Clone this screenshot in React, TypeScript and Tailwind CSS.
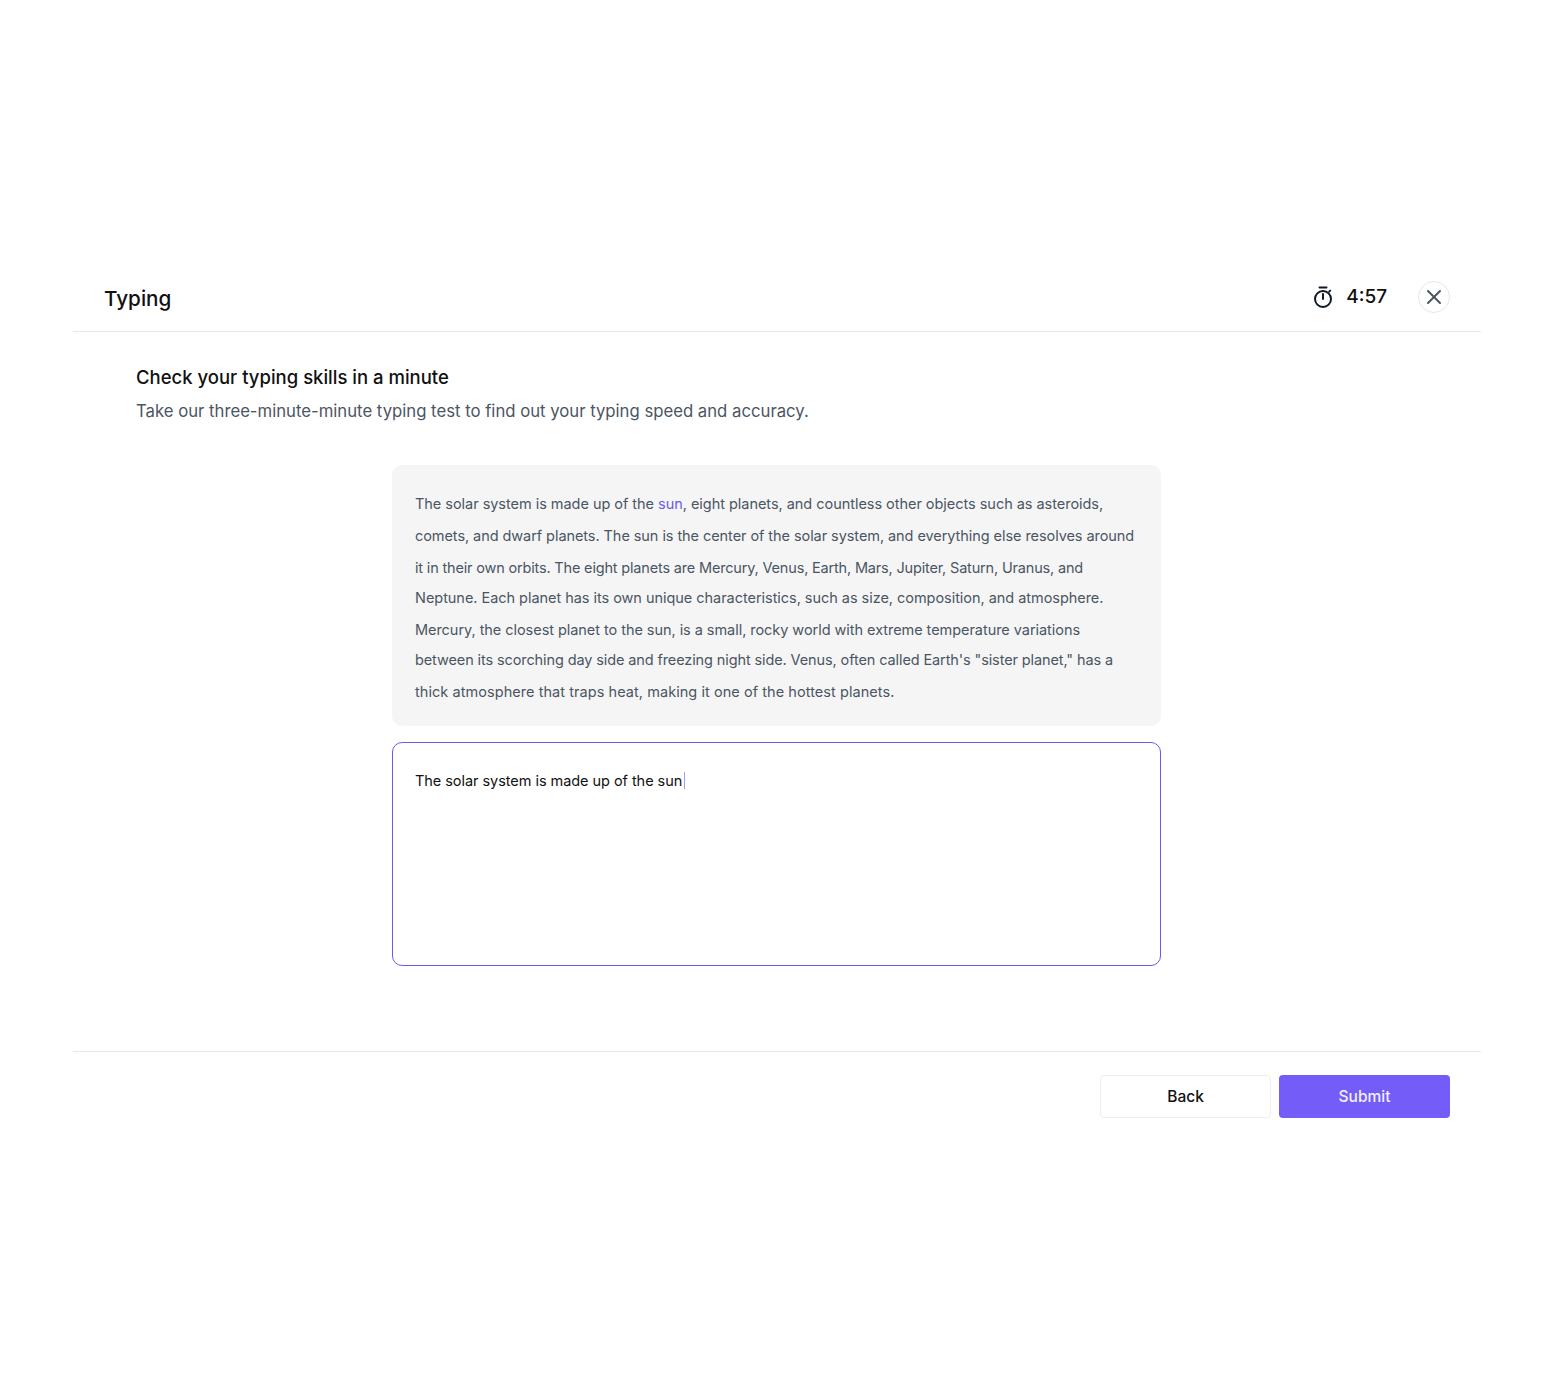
import { X } from "lucide-react";

const lines = [
  {
    cls: "tracking-[-0.036px]",
    text: (
      <>
        The solar system is made up of the <span className="text-[#7058e8]">sun</span>, eight planets, and countless other objects such as asteroids,
      </>
    ),
  },
  { cls: "mt-px tracking-[-0.067px]", text: "comets, and dwarf planets. The sun is the center of the solar system, and everything else resolves around" },
  { cls: "mt-px tracking-[-0.175px]", text: "it in their own orbits. The eight planets are Mercury, Venus, Earth, Mars, Jupiter, Saturn, Uranus, and" },
  { cls: "-mt-px tracking-[-0.04px]", text: "Neptune. Each planet has its own unique characteristics, such as size, composition, and atmosphere." },
  { cls: "mt-px tracking-[-0.05px]", text: "Mercury, the closest planet to the sun, is a small, rocky world with extreme temperature variations" },
  { cls: "-mt-px tracking-[-0.11px]", text: "between its scorching day side and freezing night side. Venus, often called Earth's \"sister planet,\" has a" },
  { cls: "mt-px tracking-[0.056px]", text: "thick atmosphere that traps heat, making it one of the hottest planets." },
];

function Stopwatch() {
  return (
    <svg width="22" height="24" viewBox="0 0 22 24" fill="none" stroke="#111827" strokeWidth="2" strokeLinecap="round">
      <path d="M7.5 2.5h7" />
      <path d="M11 9v5" />
      <path d="M17.2 6.6l1 -1" />
      <circle cx="11" cy="14" r="8" />
    </svg>
  );
}

export default function App() {
  return (
    <div className="min-h-[1400px] bg-white pt-[272px] pr-[69px] pl-[73px] font-['Inter',sans-serif]">
      <header className="flex h-[60px] items-center justify-between border-b border-[#e5e7eb] pr-[31px] pb-[10px] pl-[31px]">
        <h1 className="pt-[4px] text-[20.7px] font-medium text-[#111111]">Typing</h1>
        <div className="flex items-center">
          <Stopwatch />
          <span className="mr-[31px] ml-[12px] pt-[2px] text-[19px] font-medium text-[#111111]">4:57</span>
          <button className="flex h-8 w-8 items-center justify-center rounded-full border border-[#e5e7eb] text-[#4b5563]">
            <X size={24} strokeWidth={2} />
          </button>
        </div>
      </header>

      <section className="h-[719px] pt-[33px] pr-[64px] pl-[63px]">
        <h2 className="text-[18.5px] leading-[24px] font-medium text-[#111111]">Check your typing skills in a minute</h2>
        <p className="mt-[10px] text-[16.72px] leading-[24px] text-[#4b5563]">
          Take our three-minute-minute typing test to find out your typing speed and accuracy.
        </p>

        <div className="mx-auto mt-[42px] w-[769px]">
          <div className="h-[261px] rounded-[10px] bg-[#f5f5f5] px-[23px] pt-[23px] text-[14.5px] leading-[31px] whitespace-nowrap text-[#4b5563]">
            {lines.map((line, i) => (
              <div key={i} className={line.cls}>
                {line.text}
              </div>
            ))}
          </div>
          <div className="mt-4 h-[224px] rounded-[10px] border border-[#7058e8] px-[22px] pt-[22px] text-[14.5px] leading-[32px] tracking-[-0.05px] text-[#111111]">
            The solar system is made up of the sun<span className="ml-[2px] border-l border-[#a99cf0]"></span>
          </div>
        </div>
      </section>

      <footer className="flex justify-end gap-2 border-t border-[#e5e7eb] pt-[23px] pr-[31px]">
        <button className="h-[43px] w-[171px] rounded-[4px] border border-[#eeeeee] bg-white text-[15.5px] font-medium text-[#111111]">
          Back
        </button>
        <button className="h-[43px] w-[171px] rounded-[4px] bg-[#735cf7] text-[15.5px] font-medium text-[#f3f1ff]">
          Submit
        </button>
      </footer>
    </div>
  );
}
